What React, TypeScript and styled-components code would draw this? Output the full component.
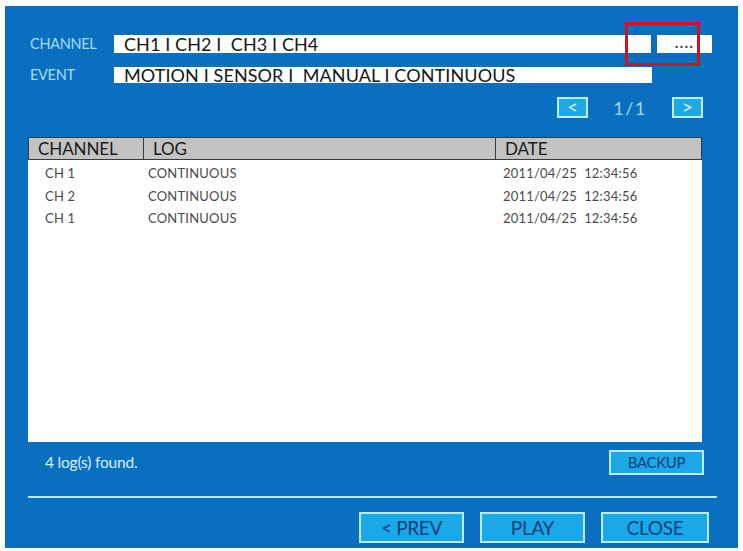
import React from 'react';
import styled, { createGlobalStyle } from 'styled-components';

const GlobalStyle = createGlobalStyle`
  html, body {
    margin: 0;
    padding: 0;
    background: #ffffff;
  }
  body {
    font-family: Lato, "Open Sans", sans-serif;
  }
`;

const SCPanel = styled.div`
  box-sizing: border-box;
  width: 733px;
  height: 542px;
  margin: 6px 0 0 5px;
  padding: 29px 0 0 23px;
  background: #0a6fbf;
  display: flex;
  flex-direction: column;
`;

const SCFieldRow = styled.div<{ $top?: number; $h: number }>`
  display: flex;
  align-items: center;
  height: ${(p) => p.$h}px;
  margin-top: ${(p) => p.$top ?? 0}px;
`;

const SCLabel = styled.div`
  width: 84px;
  padding-left: 2px;
  font-size: 14.5px;
  line-height: 1;
  color: #a6ddf6;
  letter-spacing: -0.3px;
`;

const SCInput = styled.div<{ $h: number; $w: number }>`
  box-sizing: border-box;
  width: ${(p) => p.$w}px;
  height: ${(p) => p.$h}px;
  background: #ffffff;
  padding-left: 10px;
  display: flex;
  align-items: center;
  font-size: 18px;
  line-height: 1;
  color: #151515;
  white-space: pre;
  letter-spacing: 0.1px;
`;

const SCDots = styled.div`
  position: relative;
  box-sizing: border-box;
  width: 55px;
  height: 18px;
  margin-left: 6px;
  background: #ffffff;
  display: flex;
  align-items: flex-end;
  justify-content: flex-end;
  padding: 0 18px 3px 0;
  font-size: 16px;
  font-weight: 700;
  color: #444;
  letter-spacing: 1px;
  line-height: 1;
`;

const SCHighlight = styled.div`
  position: absolute;
  left: -32px;
  top: -13px;
  width: 75px;
  height: 44px;
  box-sizing: border-box;
  border: 3px solid #d2121c;
`;

const SCPager = styled.div`
  display: flex;
  align-items: center;
  align-self: flex-end;
  height: 21px;
  margin: 14px 35px 0 0;
`;

const SCArrow = styled.div`
  box-sizing: border-box;
  width: 31px;
  height: 21px;
  background: #1da8e6;
  border: 2px solid #bdeefd;
  color: #d8f6ff;
  font-size: 19px;
  display: flex;
  align-items: center;
  justify-content: center;
  line-height: 1;
  padding-bottom: 2px;
`;

const SCPageText = styled.div`
  width: 84px;
  text-align: center;
  font-size: 18px;
  line-height: 1;
  color: #9dd7f1;
  letter-spacing: 1.5px;
`;

const SCTable = styled.div`
  margin-top: 19px;
  width: 674px;
  height: 305px;
  background: #ffffff;
  box-sizing: border-box;
`;

const SCGridRow = styled.div`
  display: grid;
  grid-template-columns: 115px 352px 207px;
`;

const SCHeadCell = styled.div<{ $last?: boolean }>`
  box-sizing: border-box;
  height: 23px;
  background: #c3c3c3;
  border-top: 1px solid #3a3a3a;
  border-bottom: 1px solid #3a3a3a;
  border-left: 1px solid #3a3a3a;
  border-right: ${(p) => (p.$last ? '1px solid #3a3a3a' : 'none')};
  padding-left: 9px;
  font-size: 17px;
  color: #1a1a1a;
  display: flex;
  align-items: center;
  letter-spacing: -0.1px;
`;

const SCCell = styled.div<{ $pad: number }>`
  height: 22.5px;
  padding-left: ${(p) => p.$pad}px;
  display: flex;
  align-items: center;
  font-size: 13px;
  color: #4a4a4a;
  white-space: pre;
  letter-spacing: 0.2px;
`;

const SCBody = styled.div`
  padding-top: 2px;
`;

const SCFooter = styled.div`
  display: flex;
  align-items: center;
  justify-content: space-between;
  width: 676px;
  margin-top: 8px;
  height: 25px;
`;

const SCFound = styled.div`
  padding-left: 17px;
  font-size: 15.5px;
  line-height: 1;
  color: #d7f3fc;
  letter-spacing: -0.2px;
`;

const SCButton = styled.button<{ $w: number; $h: number; $size: number }>`
  box-sizing: border-box;
  width: ${(p) => p.$w}px;
  height: ${(p) => p.$h}px;
  background: #1ba8e8;
  border: 2px solid #b9edfc;
  border-radius: 0;
  color: #0b3f78;
  font-family: Lato, "Open Sans", sans-serif;
  font-size: ${(p) => p.$size}px;
  line-height: 1;
  padding: 0;
  letter-spacing: -0.3px;
`;

const SCRule = styled.div`
  width: 689px;
  height: 2px;
  background: #b6ecfb;
  margin-top: 21px;
`;

const SCActions = styled.div`
  display: flex;
  gap: 16px;
  margin: 14px 0 0 331px;
`;

const logs = [
  { ch: 'CH 1', log: 'CONTINUOUS', date: '2011/04/25  12:34:56' },
  { ch: 'CH 2', log: 'CONTINUOUS', date: '2011/04/25  12:34:56' },
  { ch: 'CH 1', log: 'CONTINUOUS', date: '2011/04/25  12:34:56' },
];

const App = () => {
  return (
    <>
      <GlobalStyle />
      <SCPanel>
        <SCFieldRow $h={18}>
          <SCLabel>CHANNEL</SCLabel>
          <SCInput $w={537} $h={18}>CH1 I CH2 I  CH3 I CH4</SCInput>
          <SCDots>
            ....
            <SCHighlight />
          </SCDots>
        </SCFieldRow>

        <SCFieldRow $top={14} $h={16}>
          <SCLabel>EVENT</SCLabel>
          <SCInput $w={538} $h={16}>MOTION I SENSOR I  MANUAL I CONTINUOUS</SCInput>
        </SCFieldRow>

        <SCPager>
          <SCArrow>&lt;</SCArrow>
          <SCPageText>1/1</SCPageText>
          <SCArrow>&gt;</SCArrow>
        </SCPager>

        <SCTable>
          <SCGridRow>
            <SCHeadCell>CHANNEL</SCHeadCell>
            <SCHeadCell>LOG</SCHeadCell>
            <SCHeadCell $last>DATE</SCHeadCell>
          </SCGridRow>
          <SCBody>
            {logs.map((row, i) => (
              <SCGridRow key={i}>
                <SCCell $pad={17}>{row.ch}</SCCell>
                <SCCell $pad={5}>{row.log}</SCCell>
                <SCCell $pad={8}>{row.date}</SCCell>
              </SCGridRow>
            ))}
          </SCBody>
        </SCTable>

        <SCFooter>
          <SCFound>4 log(s) found.</SCFound>
          <SCButton $w={95} $h={25} $size={15}>BACKUP</SCButton>
        </SCFooter>

        <SCRule />

        <SCActions>
          <SCButton $w={105} $h={31} $size={19}>&lt; PREV</SCButton>
          <SCButton $w={105} $h={31} $size={19}>PLAY</SCButton>
          <SCButton $w={108} $h={31} $size={19}>CLOSE</SCButton>
        </SCActions>
      </SCPanel>
    </>
  );
};

export default App;
